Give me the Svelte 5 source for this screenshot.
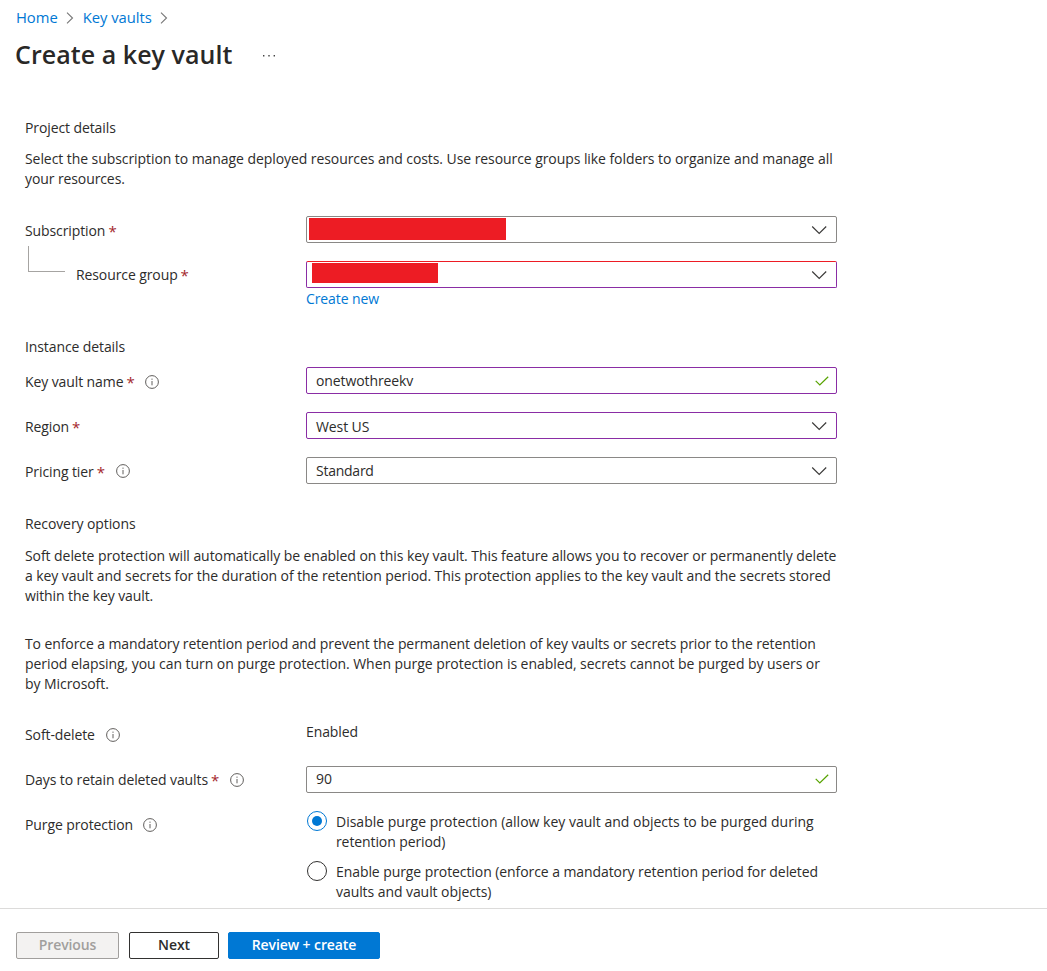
<script>
  // Each line carries its own tracking, in pixels.
  const projectIntro = [
    ['Select the subscription to manage deployed resources and costs. Use resource groups like folders to organize and manage all', -0.07],
    ['your resources.', -0.1]
  ];
  const softDelete = [
    ['Soft delete protection will automatically be enabled on this key vault. This feature allows you to recover or permanently delete', -0.067],
    ['a key vault and secrets for the duration of the retention period. This protection applies to the key vault and the secrets stored', -0.08],
    ['within the key vault.', -0.1]
  ];
  const purge = [
    ['To enforce a mandatory retention period and prevent the permanent deletion of key vaults or secrets prior to the retention', -0.1],
    ['period elapsing, you can turn on purge protection. When purge protection is enabled, secrets cannot be purged by users or', -0.06],
    ['by Microsoft.', -0.07]
  ];
  const choices = [
    { value: 'disable', lines: [['Disable purge protection (allow key vault and objects to be purged during', 0], ['retention period)', -0.1]] },
    { value: 'enable', lines: [['Enable purge protection (enforce a mandatory retention period for deleted', -0.08], ['vaults and vault objects)', -0.07]] }
  ];
  let selected = $state('disable');
</script>

{#snippet chevron()}
  <svg class="chevron" width="16" height="10" viewBox="0 0 16 10"><path d="M1.2 1.5 8.2 8.5 15.2 1.5" /></svg>
{/snippet}

{#snippet check()}
  <svg class="check" width="14" height="10" viewBox="0 0 14 10"><path d="M.7 4.8 4.8 8.9 13.2.7" /></svg>
{/snippet}

{#snippet crumb()}
  <svg class="crumb" width="8" height="12" viewBox="0 0 8 12"><path d="M1 .7 6.5 6 1 11.3" /></svg>
{/snippet}

{#snippet label(text, required, info)}
  <div class="label">
    <span>{text}</span>
    {#if required}<span class="star">*</span>{/if}
    {#if info}
      <svg class="info" width="14" height="14" viewBox="0 0 14 14">
        <circle cx="7" cy="7" r="6.4" /><path d="M7 6v4.3M7 3.6v1.2" />
      </svg>
    {/if}
  </div>
{/snippet}

{#snippet textLines(lines)}
  {#each lines as [line, tracking]}<span class="line" style:letter-spacing="{tracking}px">{line}</span>{/each}
{/snippet}

<div class="page">
  <header>
    <nav><a href="#home">Home</a>{@render crumb()}<a href="#vaults">Key vaults</a>{@render crumb()}</nav>
    <div class="heading">
      <h1>Create a key vault</h1>
      <svg width="14" height="2" viewBox="0 0 14 2"><path d="M1 0h1.4v1.4H1zM6.3 0h1.4v1.4H6.3zM11.6 0H13v1.4h-1.4z" fill="#444" /></svg>
    </div>
  </header>

  <main>
    <section class="project">
      <h2>Project details</h2>
      <p>{@render textLines(projectIntro)}</p>
      <div class="row">
        {@render label('Subscription', true, false)}
        <div class="field"><span class="redacted wide"></span>{@render chevron()}</div>
      </div>
      <div class="row nested">
        <div class="branch"><i></i>{@render label('Resource group', true, false)}</div>
        <div class="field edited flagged"><span class="redacted short"></span>{@render chevron()}</div>
      </div>
      <a class="new" href="#new">Create new</a>
    </section>

    <section class="instance">
      <h2>Instance details</h2>
      <div class="row">
        {@render label('Key vault name', true, true)}
        <div class="field edited"><span>onetwothreekv</span>{@render check()}</div>
      </div>
      <div class="row low">
        {@render label('Region', true, false)}
        <div class="field edited"><span>West US</span>{@render chevron()}</div>
      </div>
      <div class="row tier">
        {@render label('Pricing tier', true, true)}
        <div class="field"><span>Standard</span>{@render chevron()}</div>
      </div>
    </section>

    <section class="recovery">
      <h2>Recovery options</h2>
      <p>{@render textLines(softDelete)}</p>
      <p>{@render textLines(purge)}</p>
      <div class="row">
        {@render label('Soft-delete', false, true)}
        <div class="static">Enabled</div>
      </div>
      <div class="row">
        {@render label('Days to retain deleted vaults', true, true)}
        <div class="field"><span>90</span>{@render check()}</div>
      </div>
      <div class="row options">
        {@render label('Purge protection', false, true)}
        <div class="choices">
          {#each choices as c}
            <button class="choice" role="radio" aria-checked={selected === c.value} onclick={() => (selected = c.value)}>
              <span class="radio" class:on={selected === c.value}></span>
              <span>{@render textLines(c.lines)}</span>
            </button>
          {/each}
        </div>
      </div>
    </section>
  </main>

  <footer>
    <button class="btn previous" disabled>Previous</button>
    <button class="btn next">Next</button>
    <button class="btn primary">Review + create</button>
  </footer>
</div>

<style>
  :global(body) { margin: 0; background: #fff; }
  .page {
    width: 1047px; height: 971px; overflow: hidden; box-sizing: border-box;
    display: flex; flex-direction: column;
    font: 14px/20px "Open Sans", "Noto Sans", sans-serif;
    letter-spacing: -0.1px; color: #2d2c2b; white-space: nowrap;
  }
  button { font: inherit; letter-spacing: inherit; color: inherit; }
  a { color: #0078d4; text-decoration: none; }
  svg { flex: none; fill: none; }
  header { height: 118px; padding: 7px 16px 0; box-sizing: border-box; }
  nav { display: flex; align-items: center; height: 20px; font-size: 14.8px; letter-spacing: -0.04px; }
  .crumb { margin: 1px 9px 0 8px; stroke: #777; stroke-width: 1.1; }
  .heading { display: flex; align-items: center; gap: 29px; height: 36px; margin-top: 9px; }
  .heading svg { margin: 3px 0 0 1px; }
  h1 { margin: 0 0 0 -1px; font-size: 25px; line-height: 36px; font-weight: 600; letter-spacing: 0.05px; color: #292827; }
  main { flex: 1; padding-left: 25px; }
  h2 { margin: 0; font: inherit; }
  p { margin: 11px 0 0; }
  .line { display: block; }
  .row { display: grid; grid-template-columns: 281px 531px; height: 27px; align-items: center; margin-top: 18px; }
  .label { display: flex; align-items: center; padding-top: 2px; }
  .star { color: #a4262c; margin-left: 3px; font-size: 15px; }
  .info { margin-left: 10px; stroke: #605e5c; stroke-width: 1; }
  .field {
    display: flex; align-items: center; justify-content: space-between;
    height: 27px; box-sizing: border-box; border: 1px solid #8a8886; border-radius: 2px; padding: 0 9px;
  }
  .edited { border-color: #8a2da5; }
  .flagged { border-top-color: #ed1c24; }
  .low .field span { padding-top: 2px; }
  .tier .field span { letter-spacing: -0.25px; }
  .tier .info { margin: -1px 0 0 11px; }
  .chevron { stroke: #3b3a39; stroke-width: 1.15; }
  .check { stroke: #57a300; stroke-width: 1.2; }
  .field .check { margin-right: -2px; }
  .redacted { background: #ed1c24; }
  .wide { width: 197px; height: 22px; margin: -2px 0 0 -7px; }
  .short { width: 126px; height: 20px; margin: -3px 0 0 -4px; }
  .project .row { margin-top: 27px; }
  .project .nested { margin-top: 18px; }
  .branch { display: flex; align-items: center; padding-bottom: 2px; }
  .branch i { width: 36px; height: 25px; border: solid #a6a4a2; border-width: 0 0 1px 1px; margin: -30px 11px 0 3px; }
  .new { display: block; width: max-content; margin: 1px 0 0 281px; }
  .instance { margin-top: 28px; }
  .instance h2 + .row { margin-top: 10px; }
  .recovery { margin-top: 30px; }
  .recovery h2 + p { margin-top: 12px; }
  .recovery p + p { margin-top: 28px; }
  .recovery p + .row { margin-top: 27px; }
  .recovery .label { padding-top: 0; }
  .recovery .field span { padding-bottom: 2px; }
  .recovery .check { margin-top: -1px; }
  .static { margin-top: -6px; }
  .recovery .info { margin-left: 11px; }
  .recovery .options .info { margin-left: 10px; }
  .options { height: auto; align-items: start; }
  .recovery .options .label { padding-top: 4px; }
  .choices { display: grid; gap: 10px; margin-top: 1px; }
  .choice { display: flex; gap: 9px; padding: 0; border: 0; background: none; text-align: left; }
  .radio { width: 20px; height: 20px; box-sizing: border-box; border: 1px solid #323130; border-radius: 50%; margin: -1px 0 0 1px; display: grid; place-items: center; }
  .radio.on { border-color: #0078d4; }
  .radio.on::after { content: ""; width: 10px; height: 10px; border-radius: 50%; background: #0078d4; }
  footer { display: flex; height: 63px; box-sizing: border-box; border-top: 1px solid #dcdbda; padding: 23px 16px 0; }
  .btn { height: 27px; box-sizing: border-box; border: 1px solid #323130; border-radius: 2px; padding: 0 0 2px; background: #fff; font-weight: 600; line-height: 23px; }
  .previous { width: 103px; background: #f3f2f1; border-color: #a19f9d; color: #a19f9d; }
  .next { width: 90px; margin-left: 10px; }
  .primary { width: 152px; margin-left: 9px; background: #0078d4; border-color: #0078d4; color: #fff; }
</style>
